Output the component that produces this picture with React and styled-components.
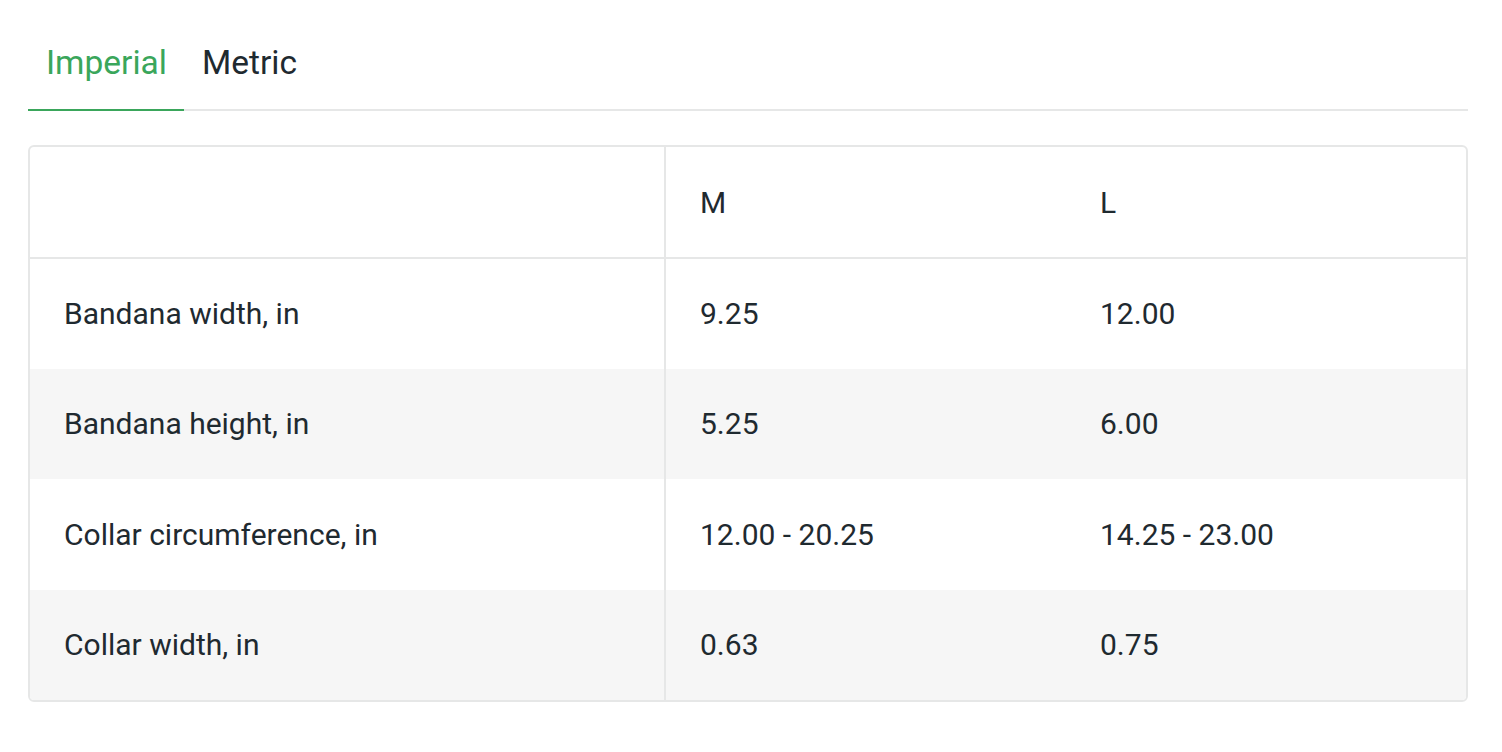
import React, { useState } from "react";
import styled, { createGlobalStyle } from "styled-components";

const GlobalStyle = createGlobalStyle`
  body {
    margin: 0;
    background: #ffffff;
    font-family: Roboto, "Liberation Sans", sans-serif;
    color: #1f2a30;
  }
`;

const Page = styled.div`
  padding: 40px 34px 0 28px;
`;

const TabBar = styled.div`
  display: flex;
  border-bottom: 2px solid #e6e7e7;
`;

const Tab = styled.div`
  padding: 0 17px 23px 18px;
  font-size: 33.5px;
  line-height: 46px;
  cursor: pointer;
  margin-bottom: -2px;
  color: ${(props) => (props.active ? "#3aa65b" : "#1f2a30")};
  border-bottom: 2px solid
    ${(props) => (props.active ? "#3aa65b" : "transparent")};
`;

const TableWrapper = styled.div`
  margin-top: 34px;
  border: 2px solid #e6e7e7;
  border-radius: 6px;
  overflow: hidden;
`;

const Table = styled.table`
  width: 100%;
  border-collapse: collapse;
  font-size: 30px;
`;

const Row = styled.tr`
  background: ${(props) => (props.striped ? "#f6f6f6" : "#ffffff")};
`;

const HeaderRow = styled.tr`
  border-bottom: 2px solid #e6e7e7;
`;

const Cell = styled.td`
  height: ${(props) => (props.head ? "111px" : "110.5px")};
  padding: 0 34px;
  text-align: left;
  font-weight: 400;
  vertical-align: middle;
  box-sizing: border-box;
  width: ${(props) => props.w || "auto"};
  border-right: ${(props) => (props.divider ? "2px solid #e6e7e7" : "none")};
`;

const rows = [
  ["Bandana width, in", "9.25", "12.00"],
  ["Bandana height, in", "5.25", "6.00"],
  ["Collar circumference, in", "12.00 - 20.25", "14.25 - 23.00"],
  ["Collar width, in", "0.63", "0.75"],
];

export default function App() {
  const [unit, setUnit] = useState("imperial");
  return (
    <Page>
      <GlobalStyle />
      <TabBar>
        <Tab active={unit === "imperial"} onClick={() => setUnit("imperial")}>
          Imperial
        </Tab>
        <Tab active={unit === "metric"} onClick={() => setUnit("metric")}>
          Metric
        </Tab>
      </TabBar>
      <TableWrapper>
        <Table>
          <thead>
            <HeaderRow>
              <Cell as="th" head w="635px" divider />
              <Cell as="th" head w="401px">M</Cell>
              <Cell as="th" head>L</Cell>
            </HeaderRow>
          </thead>
          <tbody>
            {rows.map((r, i) => (
              <Row key={r[0]} striped={i % 2 === 1}>
                <Cell divider>{r[0]}</Cell>
                <Cell>{r[1]}</Cell>
                <Cell>{r[2]}</Cell>
              </Row>
            ))}
          </tbody>
        </Table>
      </TableWrapper>
    </Page>
  );
}
